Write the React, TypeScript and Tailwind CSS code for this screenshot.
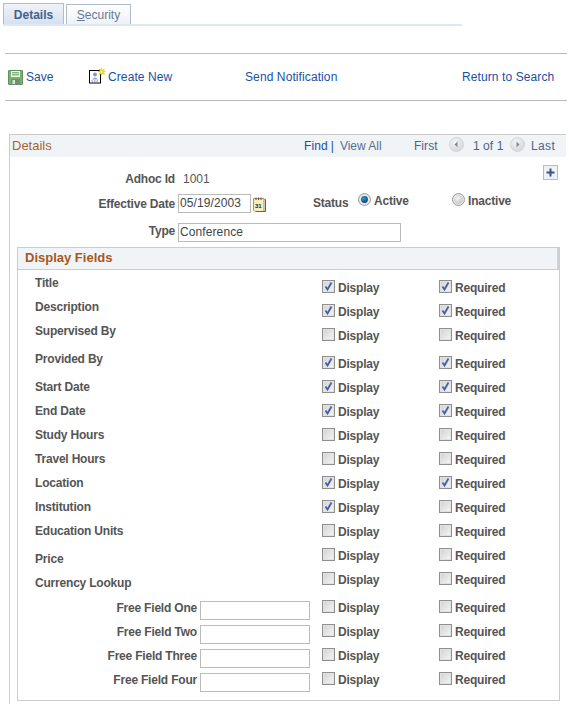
import React from 'react';

const link = 'text-[#1a4fa3] tracking-[0.1px]';
const navText = 'text-[#4f6288] tracking-[0.1px]';
const boldLabel = 'font-bold tracking-[-0.2px]';

type Row = { label: string; display: boolean; required: boolean; h: string; top: string };

const rows: Row[] = [
  { label: 'Title', display: true, required: true, h: 'h-[24px]', top: 'mt-[0px]' },
  { label: 'Description', display: true, required: true, h: 'h-[24px]', top: 'mt-[0px]' },
  { label: 'Supervised By', display: false, required: false, h: 'h-[28px]', top: 'mt-[0px]' },
  { label: 'Provided By', display: true, required: true, h: 'h-[24px]', top: 'mt-[0px]' },
  { label: 'Start Date', display: true, required: true, h: 'h-[24px]', top: 'mt-[4px]' },
  { label: 'End Date', display: true, required: true, h: 'h-[24px]', top: 'mt-[4px]' },
  { label: 'Study Hours', display: false, required: false, h: 'h-[24px]', top: 'mt-[4px]' },
  { label: 'Travel Hours', display: false, required: false, h: 'h-[24px]', top: 'mt-[4px]' },
  { label: 'Location', display: true, required: true, h: 'h-[24px]', top: 'mt-[4px]' },
  { label: 'Institution', display: true, required: false, h: 'h-[24px]', top: 'mt-[4px]' },
  { label: 'Education Units', display: false, required: false, h: 'h-[24px]', top: 'mt-[4px]' },
  { label: 'Price', display: false, required: false, h: 'h-[24px]', top: 'mt-[8px]' },
  { label: 'Currency Lookup', display: false, required: false, h: 'h-[28px]', top: 'mt-[8px]' },
];

const freeFields = ['Free Field One', 'Free Field Two', 'Free Field Three', 'Free Field Four'];

const Check = ({ on }: { on: boolean }) => (
  <span className="relative block w-[13px] h-[13px] shrink-0 border border-[#8f8f8f] bg-gradient-to-br from-[#d2d2d2] to-[#f6f6f6] shadow-[inset_0_0_0_1px_#e2e2e2]">
    {on && (
      <svg viewBox="0 0 11 11" className="absolute left-0 top-0 w-[11px] h-[11px]">
        <path d="M2.5 5.5 L4.5 8.5 L8.5 1.5" fill="none" stroke="#4560a8" strokeWidth="1.8" />
      </svg>
    )}
  </span>
);

const Toggle = ({ on, text, width }: { on: boolean; text: string; width: string }) => (
  <div className={`flex items-start ${width}`}>
    <div className="mt-[4px]">
      <Check on={on} />
    </div>
    <span className={`ml-[3px] mt-[5px] text-[12px] leading-[14px] ${boldLabel} text-[#555]`}>{text}</span>
  </div>
);

const Radio = ({ on }: { on: boolean }) => (
  <svg viewBox="0 0 13 13" className="w-[13px] h-[13px] shrink-0">
    <defs>
      <radialGradient id={on ? 'radioOn' : 'radioOff'} cx="0.4" cy="0.35" r="0.7">
        <stop offset="0" stopColor={on ? '#2a9fd8' : '#f4f4f4'} />
        <stop offset="1" stopColor={on ? '#0a3a70' : '#c4c4c4'} />
      </radialGradient>
    </defs>
    <circle cx="6.5" cy="6.5" r="6" fill="#e6e6e6" stroke="#9c9c9c" />
    <circle cx="6.5" cy="6.5" r={on ? 3.4 : 4.4} fill={`url(#${on ? 'radioOn' : 'radioOff'})`} />
  </svg>
);

const Arrow = ({ left }: { left?: boolean }) => (
  <svg viewBox="0 0 15 15" className="w-[15px] h-[15px] shrink-0 -mt-[3px]">
    <defs>
      <radialGradient id={left ? 'arrowL' : 'arrowR'} cx="0.4" cy="0.35" r="0.75">
        <stop offset="0" stopColor="#f6f6f6" />
        <stop offset="1" stopColor="#cfd1d3" />
      </radialGradient>
    </defs>
    <circle cx="7.5" cy="7.5" r="7" fill={`url(#${left ? 'arrowL' : 'arrowR'})`} stroke="#d4d6d8" />
    <path d={left ? 'M8.5 4.5 L5.5 7.5 L8.5 10.5 Z' : 'M6.5 4.5 L9.5 7.5 L6.5 10.5 Z'} fill="#85898e" />
  </svg>
);

const SaveIcon = () => (
  <svg viewBox="0 0 15 15" className="w-[15px] h-[15px] shrink-0">
    <rect x="0.5" y="0.5" width="14" height="14" rx="0.5" fill="#7fb069" stroke="#5f8f64" />
    <rect x="3" y="1" width="9" height="6" fill="#f2f8ee" />
    <path d="M4 2.8 H11 M4 4.8 H11" stroke="#4f9a58" strokeWidth="1" />
    <rect x="3" y="9" width="9" height="6" fill="#6d8f76" />
    <rect x="4.5" y="10" width="2.5" height="4" fill="#d8e4d6" />
  </svg>
);

const CreateIcon = () => (
  <svg viewBox="0 0 17 16" className="w-[17px] h-[16px] shrink-0">
    <rect x="0.5" y="2.5" width="11" height="12.5" fill="#fff" stroke="#000" />
    <circle cx="6" cy="6.5" r="1.9" fill="#7f9ad0" />
    <path d="M3 11.5 Q6 7.5 9 11.5 Z" fill="#8fa6d6" />
    <path d="M2.5 13 H9.5" stroke="#5d76ad" strokeDasharray="1.5 1" />
    <path d="M12.5 0 V7.5 M9 3.7 H16.5 M10 1 L15.5 6.5 M15.5 1 L10 6.5" stroke="#ecd800" strokeWidth="1.3" />
    <rect x="11.5" y="2.7" width="2" height="2" fill="#fff6a0" />
  </svg>
);

const CalendarIcon = () => (
  <svg viewBox="0 0 13 15" className="w-[13px] h-[15px] shrink-0">
    <path d="M0.5 1.5 H11 V14.5 H2 L0.5 13 Z" fill="#f6edc0" stroke="#a8955a" />
    <path d="M11.5 2.5 H12.5 V14.5 H3" fill="none" stroke="#6b6040" />
    <path d="M3 0.5 V3 M5.5 0.5 V3 M8 0.5 V3" stroke="#5e5028" />
    <text x="2" y="10.5" fontSize="6" fontWeight="700" fontFamily="'Liberation Sans', sans-serif" fill="#222">31</text>
  </svg>
);

const Input = ({ value, width }: { value?: string; width: string }) => (
  <div className={`${width} h-[19px] border border-[#bbb] bg-white px-[1px] text-[12px] leading-[17px] text-[#444] shrink-0 tracking-[0.1px]`}>{value}</div>
);

export default function App() {
  return (
    <div className="w-[569px] h-[704px] overflow-hidden bg-white font-['Liberation_Sans',Arial,sans-serif] text-[12px] leading-[14px] text-[#555]">
      {/* tabs */}
      <div className="ml-[3px] w-[459px] pt-[3px] h-[26px] border-b-2 border-[#dde8f6] flex items-end gap-[2px]">
        <div className="w-[61px] h-[21px] border border-b-0 border-[#b0bccd] bg-gradient-to-b from-[#eff3f9] to-[#d5e1f1] text-center font-bold text-[#45618e] leading-[22px]">
          Details
        </div>
        <div className="w-[65px] h-[20px] border border-b-0 border-[#b0bccd] bg-gradient-to-b from-[#ffffff] to-[#eef1f5] text-center text-[#66799b] leading-[21px]">
          <span className="underline">S</span>ecurity
        </div>
      </div>

      {/* toolbar */}
      <div className="mt-[27px] ml-[5px] w-[562px] h-[48px] border-y border-[#bbb] flex items-center">
        <div className="w-[84px] pl-[3px] flex items-center gap-[3px]">
          <SaveIcon />
          <span className="text-[#1a4fa3]">Save</span>
        </div>
        <div className="w-[156px] flex items-center gap-[2px] -mt-[3px]">
          <CreateIcon />
          <span className={`${link} mt-[3px]`}>Create New</span>
        </div>
        <div className="w-[217px]">
          <span className={link}>Send Notification</span>
        </div>
        <span className={link}>Return to Search</span>
      </div>

      {/* details box */}
      <div className="mt-[33px] ml-[9px] w-[557px] border-l border-[#ccc]">
        <div className="h-[23px] bg-[#f0f4f6] border-t border-[#ccc] flex items-center pl-[2px]">
          <span className="w-[292px] text-[13px] text-[#a8652b]">Details</span>
          <span className={link}>Find</span>
          <span className="ml-[3px] mr-[6px] text-[#1a4fa3]">|</span>
          <span className="w-[74px] text-[#5b6f8f]">View All</span>
          <span className={`w-[35px] ${navText}`}>First</span>
          <Arrow left />
          <span className={`ml-[9px] w-[37px] ${navText}`}>1 of 1</span>
          <Arrow />
          <span className={`ml-[6px] ${navText} tracking-[0.4px]`}>Last</span>
        </div>

        <div className="pl-[7px]">
          {/* top form */}
          <div className="h-[90px] relative">
            <div className={`flex pt-[15px] ${boldLabel}`}>
              <span className="w-[158px] text-right">Adhoc Id</span>
              <span className="ml-[8px] font-normal tracking-normal">1001</span>
            </div>
            <div className="flex mt-[8px]">
              <span className={`w-[158px] text-right pt-[3px] ${boldLabel}`}>Effective Date</span>
              <div className="ml-[3px]">
                <Input value="05/19/2003" width="w-[73px]" />
              </div>
              <div className="ml-[2px] mt-[3px]">
                <CalendarIcon />
              </div>
              <span className={`ml-[47px] mt-[2px] w-[45px] ${boldLabel}`}>Status</span>
              <div className="-mt-[1px] flex items-start w-[94px]">
                <Radio on />
                <span className={`ml-[3px] mt-[1px] ${boldLabel}`}>Active</span>
              </div>
              <div className="-mt-[1px] flex items-start">
                <Radio on={false} />
                <span className={`ml-[3px] mt-[1px] ${boldLabel}`}>Inactive</span>
              </div>
            </div>
            <div className="flex mt-[10px]">
              <span className={`w-[158px] text-right pt-[1px] ${boldLabel}`}>Type</span>
              <div className="ml-[3px]">
                <Input value="Conference" width="w-[223px]" />
              </div>
            </div>
            <div className="absolute right-[8px] top-[8px] w-[15px] h-[15px] border border-[#b5bcc8] bg-[#eef2f6] flex items-center justify-center">
              <svg viewBox="0 0 9 9" className="w-[9px] h-[9px]">
                <path d="M4.5 0.5 V8.5 M0.5 4.5 H8.5" stroke="#35558f" strokeWidth="2" />
              </svg>
            </div>
          </div>

          {/* display fields */}
          <div className="w-[543px] h-[454px] border border-[#ccc]">
            <div className="h-[22px] bg-[#f0f4f6] border-b border-[#ccc] border-r-2 border-r-[#ccd2d8] pl-[7px] text-[13px] leading-[20px] font-bold text-[#a8571e]">
              Display Fields
            </div>
            <div className="pt-[6px]">
              {rows.map((r) => (
                <div key={r.label} className={`flex items-start ${r.h}`}>
                  <div className={`w-[304px] pl-[17px] ${boldLabel} ${r.top}`}>{r.label}</div>
                  <Toggle on={r.display} text="Display" width="w-[117px]" />
                  <Toggle on={r.required} text="Required" width="w-[110px]" />
                </div>
              ))}
              {freeFields.map((f) => (
                <div key={f} className="flex items-start h-[24px]">
                  <div className={`w-[179px] text-right mt-[5px] ${boldLabel}`}>{f}</div>
                  <div className="ml-[3px] mt-[5px]">
                    <Input width="w-[110px]" />
                  </div>
                  <div className="w-[12px]" />
                  <Toggle on={false} text="Display" width="w-[117px]" />
                  <Toggle on={false} text="Required" width="w-[110px]" />
                </div>
              ))}
            </div>
          </div>
          <div className="h-[10px]" />
        </div>
      </div>
    </div>
  );
}
